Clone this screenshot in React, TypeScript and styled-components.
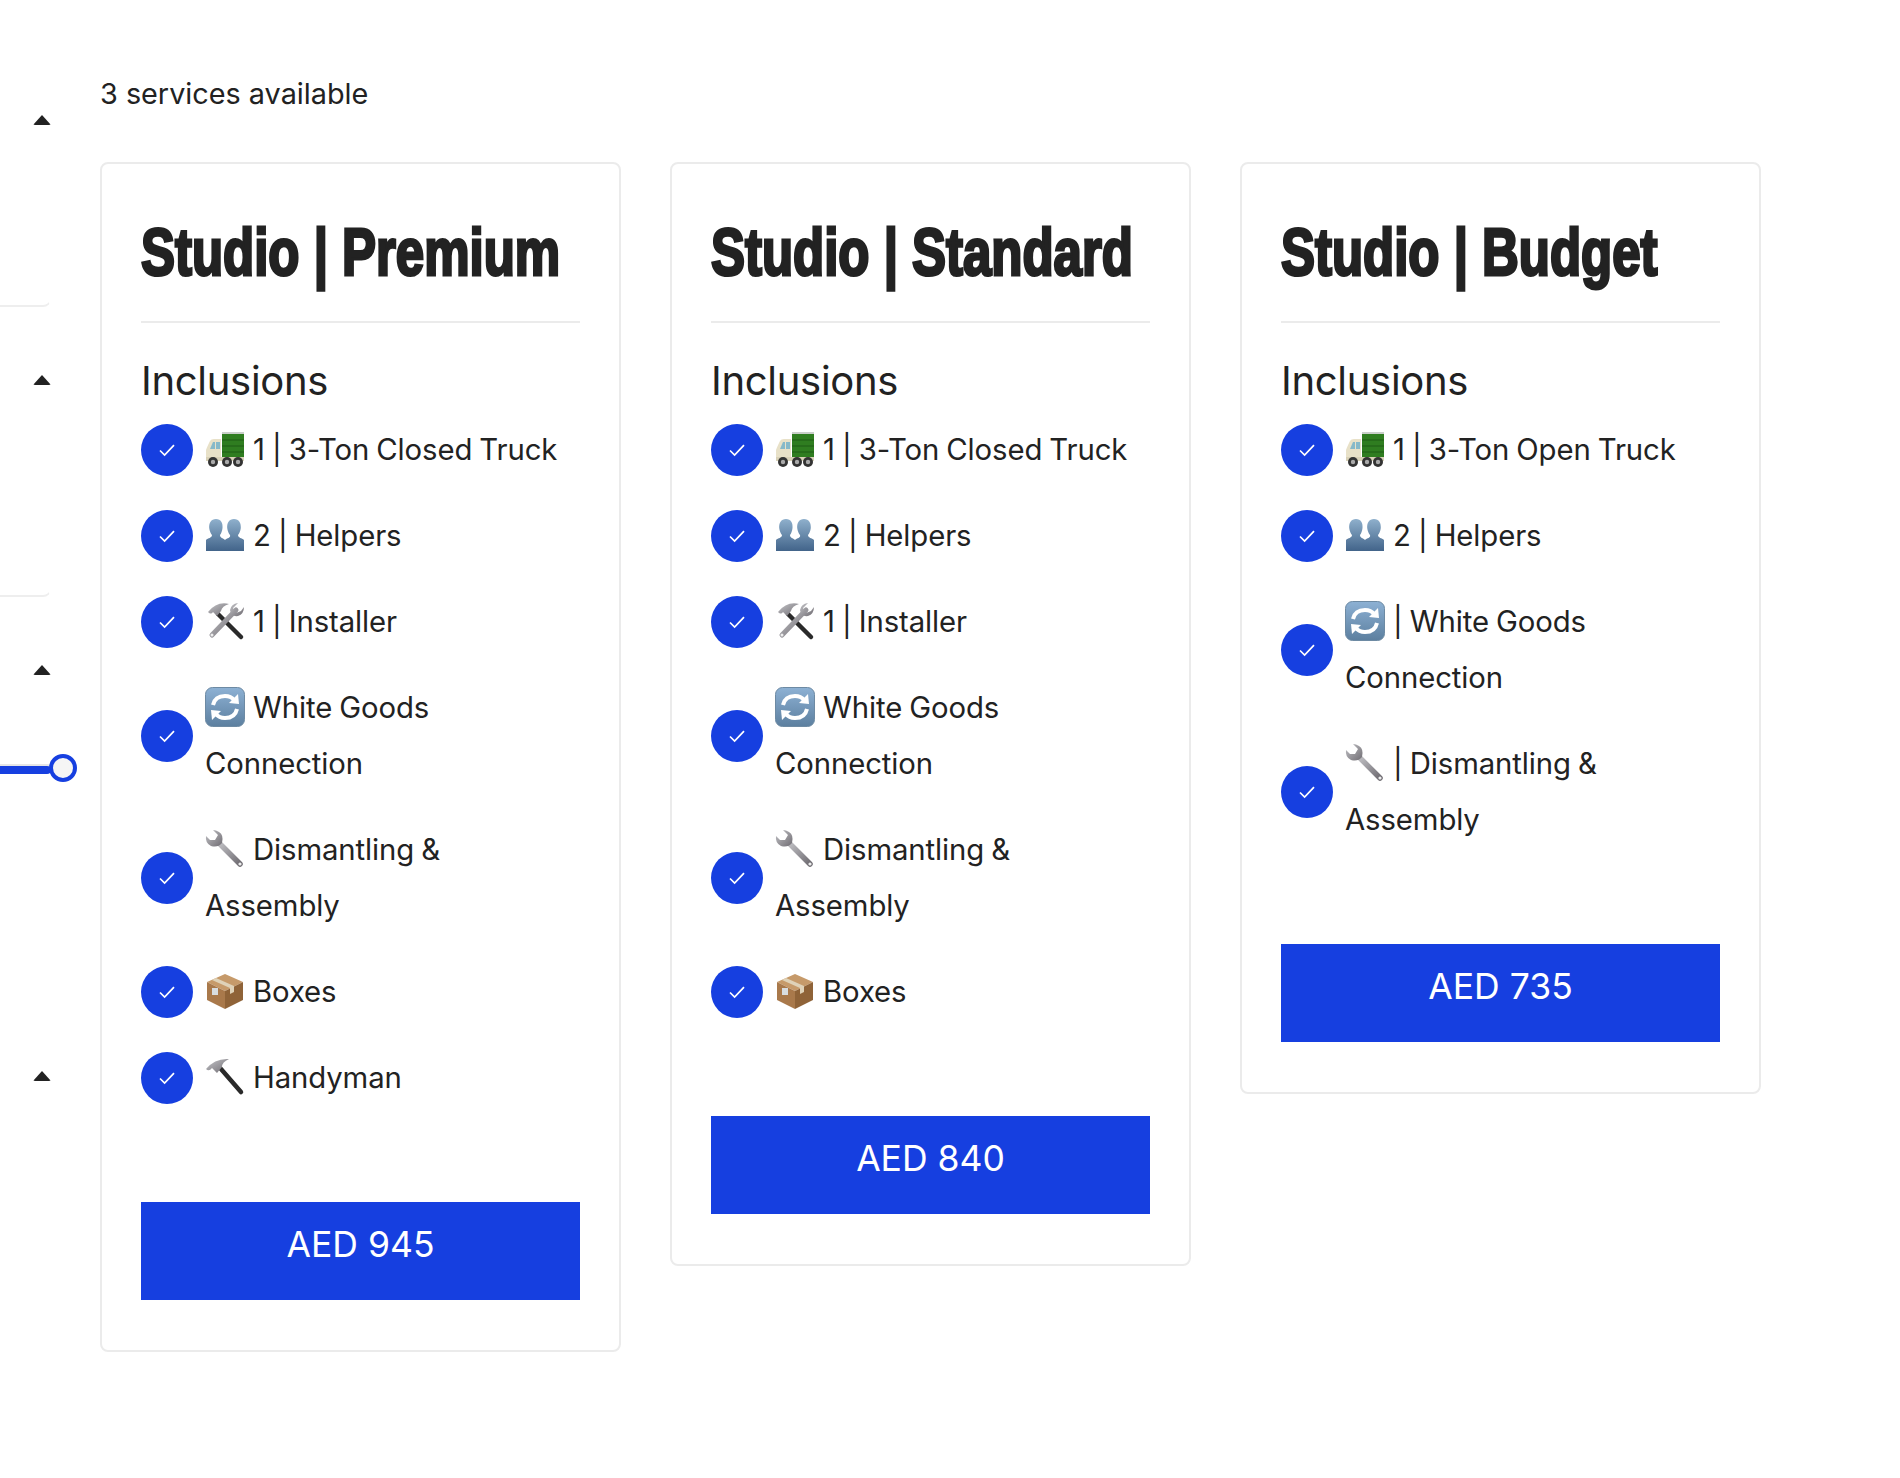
import React, { FC } from "react";
import styled, { createGlobalStyle } from "styled-components";

const GlobalStyle = createGlobalStyle`
  html, body {
    margin: 0;
    padding: 0;
    background: #fff;
  }
  body {
    color: #222;
    font-family: "Inter", "Liberation Sans", sans-serif;
  }
`;

const Page = styled.div`
  display: flex;
  align-items: flex-start;
  gap: 49px;
  width: 1900px;
  height: 1478px;
  overflow: hidden;
`;

const Sidebar = styled.aside`
  display: flex;
  flex-direction: column;
  flex: 0 0 51px;
  min-width: 0;
  padding-top: 88px;
`;

const FilterSection = styled.div<{ $height: number; $open?: boolean }>`
  box-sizing: border-box;
  height: ${p => p.$height}px;
  margin-bottom: 41px;
  padding: 27px 0 0 33px;
  border-right: 1px solid transparent;
  border-bottom: 2px solid ${p => (p.$open ? "transparent" : "#eeeeee")};
  border-radius: 0 8px 8px 0;
  position: relative;
`;

const Caret = styled.span`
  display: block;
  width: 18px;
  height: 10px;
  background: #222;
  clip-path: polygon(50% 0, 100% 100%, 0 100%);
  border-radius: 2px;
`;

const Rail = styled.div`
  position: absolute;
  left: 0;
  right: -1px;
  top: 128px;
  height: 8px;
  border-radius: 0 4px 4px 0;
  background: #163fe0;
  box-shadow: 0 -2px 0 #e6e6e6;
`;

const Thumb = styled.span`
  position: absolute;
  left: 49px;
  top: 116px;
  box-sizing: border-box;
  width: 28px;
  height: 28px;
  border: 4px solid #163fe0;
  border-radius: 50%;
  background: #f5f5f5;
`;

const Main = styled.main`
  display: flex;
  flex-direction: column;
  width: 1660px;
  padding-top: 76px;
`;

const Count = styled.div`
  height: 36px;
  margin-bottom: 50px;
  font-size: 28.8px;
  line-height: 36px;
`;

const Cards = styled.div`
  display: flex;
  align-items: flex-start;
  gap: 49px;
`;

const Card = styled.article`
  box-sizing: border-box;
  width: 521px;
  padding: 40px 39px;
  border: 2px solid #ebebeb;
  border-radius: 8px;
`;

const Title = styled.h2`
  margin: 0;
  padding: 10px 0 16px;
  border-bottom: 2px solid #ebebeb;
  line-height: 76px;
  white-space: nowrap;
`;

const TitleText = styled.span`
  display: inline-block;
  color: #222;
  font-family: "Liberation Sans", sans-serif;
  font-size: 66px;
  font-weight: 700;
  transform: scaleX(0.772);
  transform-origin: left center;
  -webkit-text-stroke: 3px #222;
`;

const Heading = styled.h3`
  margin: 30px 0 13px;
  font-size: 40px;
  font-weight: 400;
  line-height: 56px;
  letter-spacing: -0.3px;
`;

const List = styled.ul`
  display: flex;
  flex-direction: column;
  gap: 30px;
  margin: 0;
  padding: 0;
  list-style: none;
`;

const Row = styled.li`
  display: flex;
  align-items: center;
  gap: 12px;
  font-size: 29.3px;
  line-height: 56px;
  letter-spacing: -0.1px;
  word-spacing: -1px;
`;

const Tick = styled.span`
  display: flex;
  flex: 0 0 52px;
  align-items: center;
  justify-content: center;
  height: 52px;
  border-radius: 50%;
  background: #163fe0;
`;

const Label = styled.span`
  flex: 1;
`;

const Emoji = styled.svg`
  display: inline-block;
  width: 40px;
  height: 40px;
  margin-right: 8px;
  vertical-align: -9px;
`;

const PriceButton = styled.button`
  display: block;
  box-sizing: border-box;
  width: 100%;
  height: 98px;
  margin: 96px 0 10px;
  padding: 0 0 12px;
  border: 0;
  background: #163fe0;
  color: #fff;
  font-family: inherit;
  font-size: 35.5px;
  line-height: 40px;
  text-align: center;
`;

const Check = () => (
  <svg width="18" height="14" viewBox="0 0 18 14" fill="none">
    <path d="M2 7.5 L6.6 12 L16 2.2" stroke="#fff" strokeWidth="1.7" />
  </svg>
);

const Metal = () => (
  <defs>
    <linearGradient id="metal" x1="0" y1="0" x2="1" y2="1">
      <stop offset="0" stopColor="#c4c4c8" />
      <stop offset="1" stopColor="#6f6c72" />
    </linearGradient>
  </defs>
);

const Truck = () => (
  <Emoji viewBox="0 0 40 40">
    <rect x="17" y="3" width="22" height="26" fill="#2f7d20" />
    <rect x="17" y="3" width="22" height="2" fill="#c9cfc9" />
    <path d="M17 11h22M17 17h22M17 23h22" stroke="#1f5c14" strokeWidth="1" />
    <path d="M1 31 V21 Q2 18 5 12 Q6 10 9 10 H16 V31 Z" fill="#e8e1c8" />
    <path d="M5 20 L8 13 H10 V20 Z" fill="#86b9c9" />
    <rect x="11" y="13" width="4" height="7" fill="#86b9c9" />
    <rect x="1" y="28" width="38" height="4" fill="#d9d2b8" />
    <g fill="#333">
      <circle cx="8" cy="33" r="5" />
      <circle cx="22" cy="33" r="5" />
      <circle cx="33" cy="33" r="5" />
    </g>
    <g fill="#aaa">
      <circle cx="8" cy="33" r="2.2" />
      <circle cx="22" cy="33" r="2.2" />
      <circle cx="33" cy="33" r="2.2" />
    </g>
  </Emoji>
);

const Busts = () => (
  <Emoji viewBox="0 0 40 40">
    <defs>
      <linearGradient id="bust" x1="0" y1="0" x2="0" y2="1">
        <stop offset="0" stopColor="#8fb0cc" />
        <stop offset="1" stopColor="#42648a" />
      </linearGradient>
    </defs>
    <path d="M11 4c5 0 7 4 6.500 9-.3 3-1.500 6-2.500 7 0 3 3 3 5 5v11H1V25c2-2 6-2 6-5-1-1-2.500-4-2.800-7C3.800 8 6 4 11 4z" fill="url(#bust)" />
    <path d="M29 4c5 0 7.200 4 6.800 9-.3 3-1.800 6-2.800 7 0 3 4 3 6 5v11H20V25c2-2 6-2 5-5-1-1-2.500-4-2.800-7-.4-5 1.800-9 6.800-9z" fill="url(#bust)" />
  </Emoji>
);

const HammerWrench = () => (
  <Emoji viewBox="0 0 40 40">
    <Metal />
    <path d="M13 13 L36 36" stroke="#2a2a2a" strokeWidth="4.500" strokeLinecap="round" />
    <path d="M31 9 L7 34" stroke="url(#metal)" strokeWidth="5" strokeLinecap="round" />
    <path d="M3 11 Q12 0 24 3 Q17 5 16 10 L12 15 L8 11 Q6 14 3 11z" fill="url(#metal)" />
    <path d="M33 2 L28 7 L31 12 L36 10 L39 6 Q39 13 33 15 Q26 16 25 9 Q26 3 33 2z" fill="url(#metal)" />
    <circle cx="7" cy="34" r="1.500" fill="#eee" />
  </Emoji>
);

const Refresh = () => (
  <Emoji viewBox="0 0 40 40">
    <defs>
      <linearGradient id="tile" x1="0" y1="0" x2="0" y2="1">
        <stop offset="0" stopColor="#8db1d4" />
        <stop offset="1" stopColor="#5c7f9f" />
      </linearGradient>
    </defs>
    <rect x="0.5" y="0.500" width="39" height="39" rx="7" fill="url(#tile)" stroke="#6d8aa3" />
    <path d="M8 18 Q10 9 20 9 Q26 9 29 13" fill="none" stroke="#fff" strokeWidth="4" />
    <path d="M24 16 L34 17 L33 7 Z" fill="#fff" />
    <path d="M32 22 Q30 31 20 31 Q14 31 11 27" fill="none" stroke="#fff" strokeWidth="4" />
    <path d="M16 24 L6 23 L7 33 Z" fill="#fff" />
  </Emoji>
);

const Wrench = () => (
  <Emoji viewBox="0 0 40 40">
    <Metal />
    <path d="M13 13 L35 35" stroke="url(#metal)" strokeWidth="5.500" strokeLinecap="round" />
    <path d="M8 1 L13 6 L10 11 L5 11 L1 7 Q0 14 6 17 Q13 19 17 14 Q19 6 14 3 Q11 1 8 1z" fill="url(#metal)" />
    <circle cx="35" cy="35" r="1.600" fill="#eee" />
  </Emoji>
);

const Box = () => (
  <Emoji viewBox="0 0 40 40">
    <path d="M20 3 L38 11 L20 20 L2 11 Z" fill="#c69a6a" />
    <path d="M2 11 L20 20 V38 L2 29 Z" fill="#a9794b" />
    <path d="M38 11 L20 20 V38 L38 29 Z" fill="#8f6338" />
    <path d="M11 7 L29 15 V21 L25 23 V17 L7 9 Z" fill="#dfd2b8" />
    <rect x="7" y="17" width="6" height="7" fill="#d8dde0" />
  </Emoji>
);

const Hammer = () => (
  <Emoji viewBox="0 0 40 40">
    <Metal />
    <path d="M16 12 L36 35" stroke="#2a2a2a" strokeWidth="4.500" strokeLinecap="round" />
    <path d="M1 12 Q10 1 24 2 Q17 5 17 10 L12 16 L7 11 Q4 15 1 12z" fill="url(#metal)" />
  </Emoji>
);

type Inclusion = { icon: FC; text: string };

const truck = (kind: string): Inclusion => ({ icon: Truck, text: `1 | 3-Ton ${kind} Truck` });
const helpers: Inclusion = { icon: Busts, text: "2 | Helpers" };
const installer: Inclusion = { icon: HammerWrench, text: "1 | Installer" };
const boxes: Inclusion = { icon: Box, text: "Boxes" };
const handyman: Inclusion = { icon: Hammer, text: "Handyman" };

const services: { name: string; price: string; items: Inclusion[] }[] = [
  {
    name: "Studio | Premium",
    price: "AED 945",
    items: [
      truck("Closed"),
      helpers,
      installer,
      { icon: Refresh, text: "White Goods Connection" },
      { icon: Wrench, text: "Dismantling & Assembly" },
      boxes,
      handyman,
    ],
  },
  {
    name: "Studio | Standard",
    price: "AED 840",
    items: [
      truck("Closed"),
      helpers,
      installer,
      { icon: Refresh, text: "White Goods Connection" },
      { icon: Wrench, text: "Dismantling & Assembly" },
      boxes,
    ],
  },
  {
    name: "Studio | Budget",
    price: "AED 735",
    items: [
      truck("Open"),
      helpers,
      { icon: Refresh, text: "| White Goods Connection" },
      { icon: Wrench, text: "| Dismantling & Assembly" },
    ],
  },
];

const App = () => (
  <Page>
    <GlobalStyle />
    <Sidebar>
      <FilterSection $height={219}>
        <Caret />
      </FilterSection>
      <FilterSection $height={249}>
        <Caret />
      </FilterSection>
      <FilterSection $height={365} $open>
        <Caret />
        <Rail />
        <Thumb />
      </FilterSection>
      <FilterSection $height={200} $open>
        <Caret />
      </FilterSection>
    </Sidebar>
    <Main>
      <Count>3 services available</Count>
      <Cards>
        {services.map(service => (
          <Card key={service.name}>
            <Title>
              <TitleText>{service.name}</TitleText>
            </Title>
            <Heading>Inclusions</Heading>
            <List>
              {service.items.map(item => (
                <Row key={item.text}>
                  <Tick>
                    <Check />
                  </Tick>
                  <Label>
                    <item.icon />
                    {item.text}
                  </Label>
                </Row>
              ))}
            </List>
            <PriceButton>{service.price}</PriceButton>
          </Card>
        ))}
      </Cards>
    </Main>
  </Page>
);

export default App;
